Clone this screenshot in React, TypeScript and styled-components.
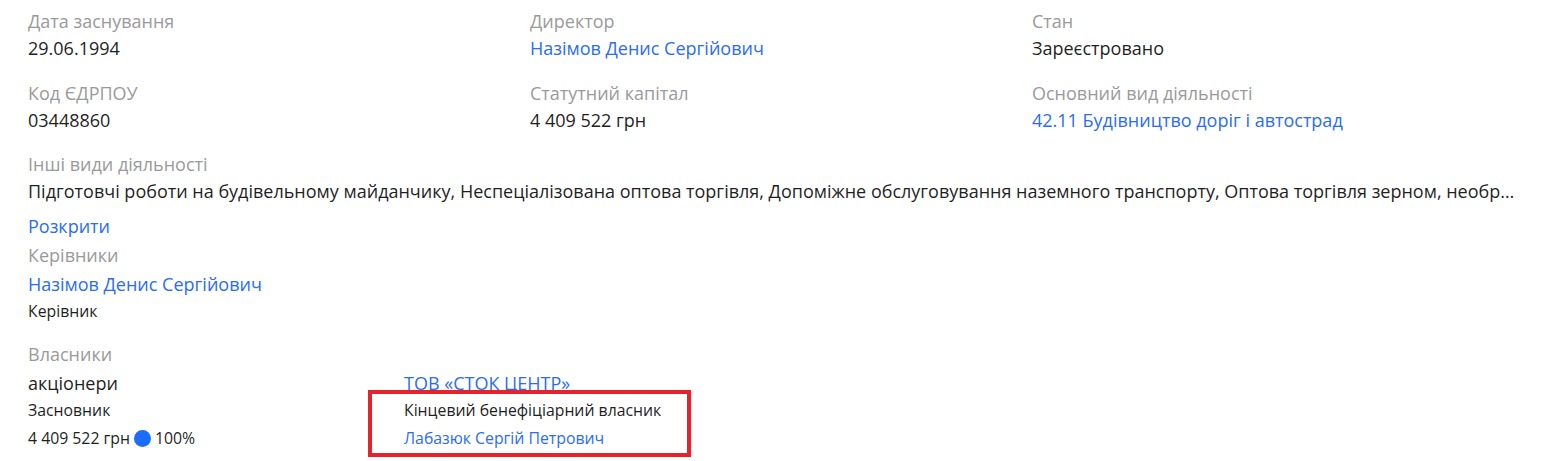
import React from "react";
import styled, { createGlobalStyle } from "styled-components";

const Global = createGlobalStyle`
  html, body { margin: 0; padding: 0; background: #fff; }
  body { font-family: "Open Sans", "Noto Sans", sans-serif; color: #1f1f1f; min-height: 461px; }
`;

const Page = styled.div`
  padding: 8px 28px 12px 28px;
  width: 1555px;
  box-sizing: border-box;
`;

const Grid = styled.div`
  display: grid;
  grid-template-columns: repeat(3, 502px);
  row-gap: 18px;
`;

const Field = styled.div`
  display: flex;
  flex-direction: column;
  min-width: 0;
`;

const Label = styled.div`
  font-size: 18px;
  line-height: 27px;
  color: #9a9a9a;
`;

const Value = styled.div<{ $link?: boolean }>`
  font-size: 18px;
  line-height: 27px;
  color: ${(p) => (p.$link ? "#2a6cf6" : "#1f1f1f")};
  white-space: nowrap;
  overflow: hidden;
  text-overflow: ellipsis;
`;

const Section = styled.div<{ $mt?: number }>`
  margin-top: ${(p) => p.$mt ?? 0}px;
  display: flex;
  flex-direction: column;
`;

const Ellipsis = styled(Value)`
  max-width: 1494px;
`;

const LinkLine = styled.div<{ $mt?: number }>`
  margin-top: ${(p) => p.$mt ?? 0}px;
  font-size: 18px;
  line-height: 27px;
  color: #2a6cf6;
`;

const Small = styled.div<{ $link?: boolean }>`
  font-size: 15.8px;
  line-height: 26px;
  color: ${(p) => (p.$link ? "#2a6cf6" : "#1f1f1f")};
  display: flex;
  align-items: center;
  gap: 4px;
  white-space: nowrap;
`;

const Owners = styled.div`
  display: grid;
  grid-template-columns: 376px 376px;
  margin-top: 2px;
`;

const OwnerCol = styled.div`
  display: flex;
  flex-direction: column;
`;

const Highlight = styled.div`
  position: relative;
  display: flex;
  flex-direction: column;
  &::after {
    content: "";
    position: absolute;
    left: -36px;
    top: -7px;
    width: 323px;
    height: 67px;
    border: 4px solid #e8222a;
    box-sizing: border-box;
    pointer-events: none;
  }
`;

const Dot = styled.span`
  display: inline-block;
  width: 17px;
  height: 17px;
  border-radius: 50%;
  background: #1a6dff;
`;

const Small2 = styled(Small)`
  line-height: 30px;
`;

export default function App() {
  return (
    <>
      <Global />
      <Page>
        <Grid>
          <Field>
            <Label>Дата заснування</Label>
            <Value>29.06.1994</Value>
          </Field>
          <Field>
            <Label>Директор</Label>
            <Value $link>Назімов Денис Сергійович</Value>
          </Field>
          <Field>
            <Label>Стан</Label>
            <Value>Зареєстровано</Value>
          </Field>
          <Field>
            <Label>Код ЄДРПОУ</Label>
            <Value>03448860</Value>
          </Field>
          <Field>
            <Label>Статутний капітал</Label>
            <Value>4 409 522 грн</Value>
          </Field>
          <Field>
            <Label>Основний вид діяльності</Label>
            <Value $link>42.11 Будівництво доріг і автострад</Value>
          </Field>
        </Grid>
        <Section $mt={17}>
          <Label>Інші види діяльності</Label>
          <Ellipsis>
            Підготовчі роботи на будівельному майданчику, Неспеціалізована оптова торгівля, Допоміжне обслуговування наземного транспорту, Оптова торгівля зерном, необробленим тютюном, насінням і кормами для тварин
          </Ellipsis>
          <LinkLine $mt={8}>Розкрити</LinkLine>
        </Section>
        <Section $mt={2}>
          <Label>Керівники</Label>
          <LinkLine $mt={2}>Назімов Денис Сергійович</LinkLine>
          <Small>Керівник</Small>
        </Section>
        <Section $mt={17}>
          <Label>Власники</Label>
          <Owners>
            <OwnerCol>
              <Value>акціонери</Value>
              <Small>Засновник</Small>
              <Small2>
                4 409 522 грн <Dot /> 100%
              </Small2>
            </OwnerCol>
            <OwnerCol>
              <Value $link>ТОВ «СТОК ЦЕНТР»</Value>
              <Highlight>
                <Small>Кінцевий бенефіціарний власник</Small>
                <Small2 $link>Лабазюк Сергій Петрович</Small2>
              </Highlight>
            </OwnerCol>
          </Owners>
        </Section>
      </Page>
    </>
  );
}
